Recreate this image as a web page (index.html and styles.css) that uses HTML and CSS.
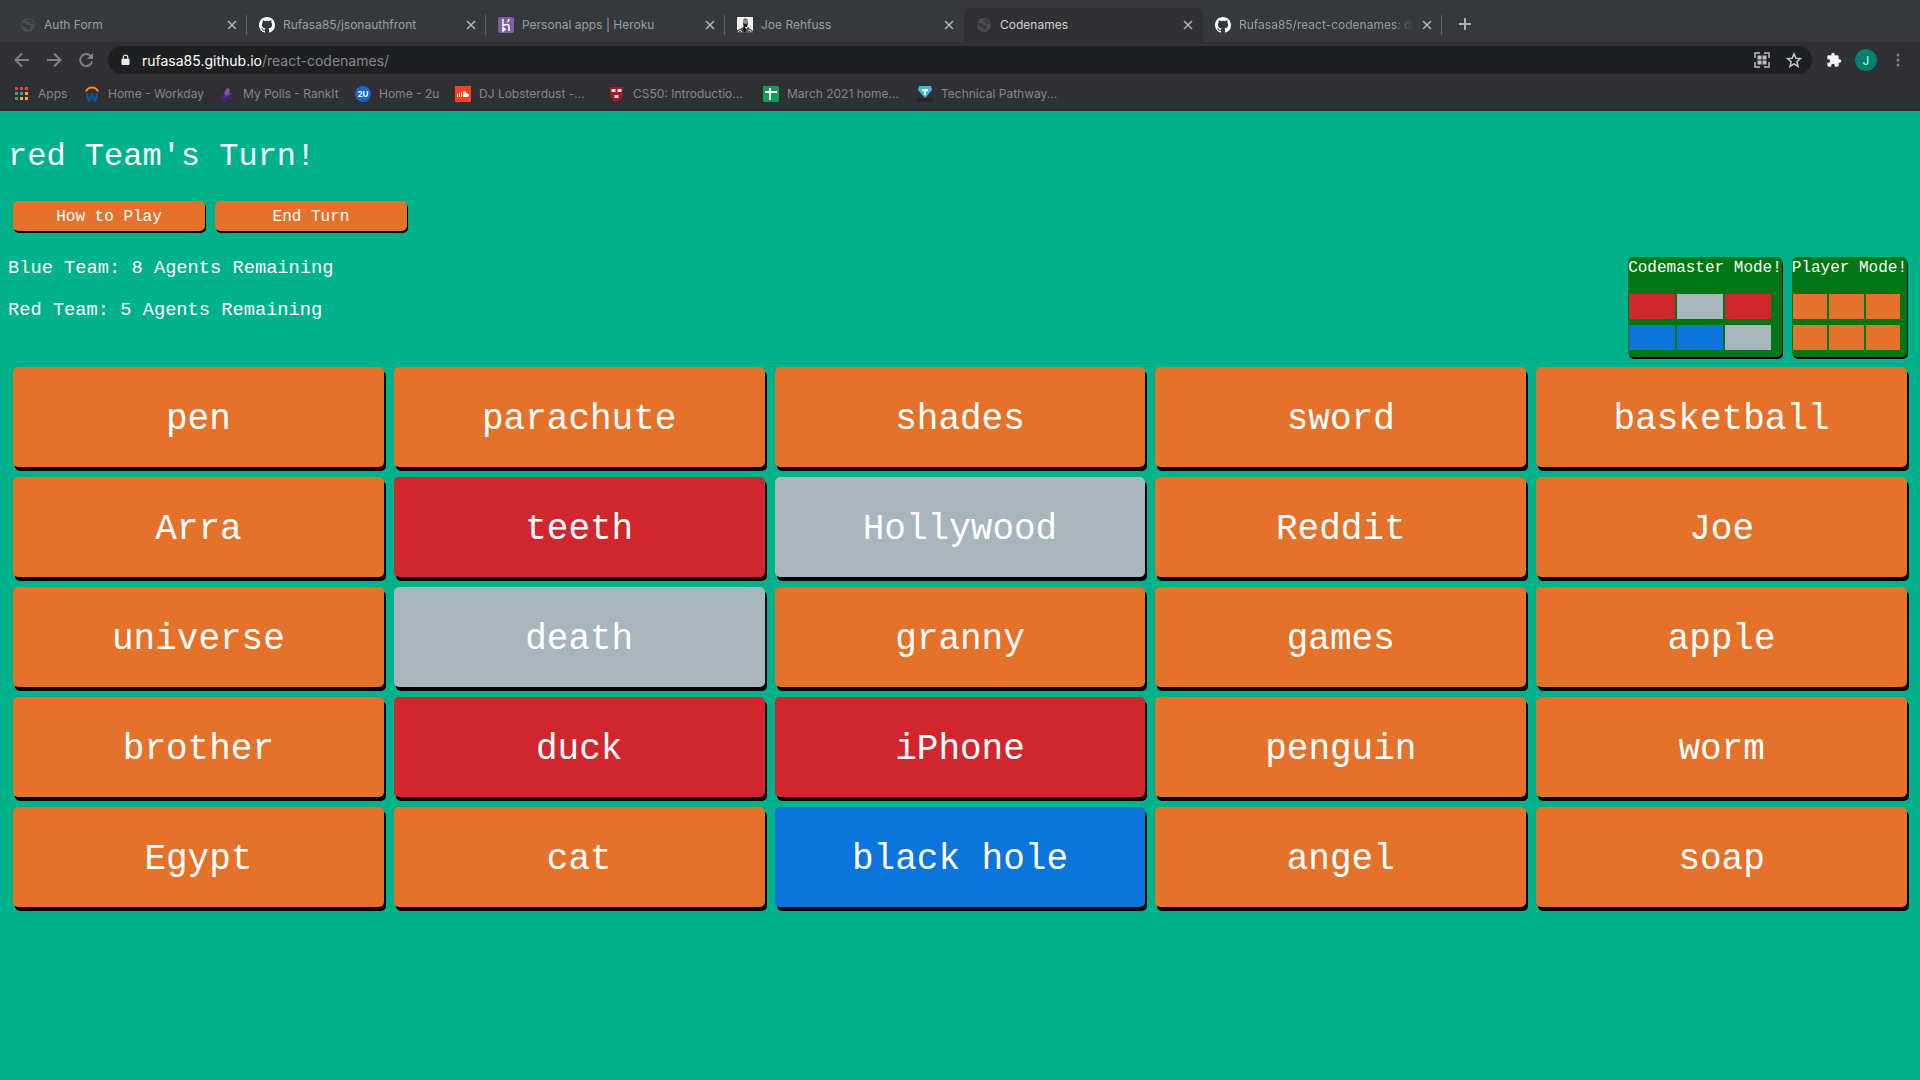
FILE: index.html
```html
<!DOCTYPE html>
<html lang="en">
<head>
<meta charset="utf-8">
<title>Codenames</title>
<link rel="stylesheet" href="styles.css">
</head>
<body>
<svg class="defs" width="0" height="0" aria-hidden="true">
  <symbol id="globe" viewBox="0 0 16 16"><circle cx="8" cy="8" r="7" fill="#4b4c50"/><path d="M2 6l3 0 2 2 3 0 1 2-2 3-2 0 0-2-2-1-3-1zM8 2l3 1 3 4-3 0-1-2-3-1z" fill="#36383b"/></symbol>
  <symbol id="github" viewBox="0 0 16 16"><path fill="#fff" d="M8 0C3.58 0 0 3.58 0 8c0 3.54 2.29 6.53 5.47 7.59.4.07.55-.17.55-.38 0-.19-.01-.82-.01-1.49-2.01.37-2.53-.49-2.69-.94-.09-.23-.48-.94-.82-1.13-.28-.15-.68-.52-.01-.53.63-.01 1.08.58 1.23.82.72 1.21 1.87.87 2.33.66.07-.52.28-.87.51-1.07-1.78-.2-3.64-.89-3.64-3.95 0-.87.31-1.59.82-2.15-.08-.2-.36-1.02.08-2.12 0 0 .67-.21 2.2.82.64-.18 1.32-.27 2-.27s1.36.09 2 .27c1.53-1.04 2.2-.82 2.2-.82.44 1.1.16 1.92.08 2.12.51.56.82 1.27.82 2.15 0 3.07-1.87 3.75-3.65 3.95.29.25.54.73.54 1.48 0 1.07-.01 1.93-.01 2.2 0 .21.15.46.55.38A8.01 8.01 0 0 0 16 8c0-4.42-3.58-8-8-8z"/></symbol>
  <symbol id="close" viewBox="0 0 10 10"><path d="M1 1l8 8M9 1l-8 8" stroke="currentColor" stroke-width="1.5" fill="none"/></symbol>
</svg>

<header class="browser">
  <nav class="tabs" aria-label="Tabs">
    <div class="tab"><svg class="icon"><use href="#globe"/></svg><span class="tab-title">Auth Form</span><button class="close" aria-label="Close tab"><svg><use href="#close"/></svg></button></div>
    <div class="tab"><svg class="icon"><use href="#github"/></svg><span class="tab-title">Rufasa85/jsonauthfront</span><button class="close" aria-label="Close tab"><svg><use href="#close"/></svg></button></div>
    <div class="tab"><svg class="icon" viewBox="0 0 16 16"><rect width="16" height="16" rx="2" fill="#7f5fa6"/><path d="M5 2v6.500q6-2.500 6 1V14M5 10.500v3.500l2-1.750zM11 2q0 1.500-1.500 3" fill="none" stroke="#fff" stroke-width="1.500"/></svg><span class="tab-title">Personal apps | Heroku</span><button class="close" aria-label="Close tab"><svg><use href="#close"/></svg></button></div>
    <div class="tab before-active"><svg class="icon" viewBox="0 0 16 16"><rect width="16" height="16" fill="#f2f2f2"/><path d="M6 3q2-3 5 0v4q-1 3-3 3T6 7z" fill="#8b8b8b"/><path d="M6 3q2-3 5 0L8 2zM6 6q3 2 5 0l-1 4H7z" fill="#222"/><path d="M0 13l5-2 2-2 2 3 2-2 5 4v2H0z" fill="#555"/><path d="M7 9l2 3-1 4-2-3z" fill="#111"/><path d="M1 15l2-2 2 2M11 14l2-1 1 2" stroke="#ccc" fill="none"/></svg><span class="tab-title">Joe Rehfuss</span><button class="close" aria-label="Close tab"><svg><use href="#close"/></svg></button></div>
    <div class="tab active"><svg class="icon"><use href="#globe"/></svg><span class="tab-title">Codenames</span><button class="close" aria-label="Close tab"><svg><use href="#close"/></svg></button></div>
    <div class="tab"><svg class="icon"><use href="#github"/></svg><span class="tab-title fade">Rufasa85/react-codenames: di</span><button class="close" aria-label="Close tab"><svg><use href="#close"/></svg></button></div>
    <button class="new-tab" aria-label="New tab"><svg viewBox="0 0 12 12"><path d="M6 0v12M0 6h12" stroke="currentColor" stroke-width="2"/></svg></button>
  </nav>

  <div class="toolbar">
    <button class="tool" aria-label="Back"><svg viewBox="0 0 16 16"><path d="M15 8H2M8 1.500L1.500 8 8 14.500" fill="none" stroke="currentColor" stroke-width="2"/></svg></button>
    <button class="tool" aria-label="Forward"><svg viewBox="0 0 16 16"><path d="M1 8h13M8 1.500L14.500 8 8 14.500" fill="none" stroke="currentColor" stroke-width="2"/></svg></button>
    <button class="tool" aria-label="Reload"><svg viewBox="0 0 16 16"><path d="M13 4.500A6 6 0 1 0 14 9.500" fill="none" stroke="currentColor" stroke-width="2"/><path d="M15 1v6H9z" fill="currentColor"/></svg></button>
    <div class="address">
      <svg class="lock" viewBox="0 0 10 12"><path d="M2.500 5V3a2.500 2.500 0 0 1 5 0v2" fill="none" stroke="#e8e8e8" stroke-width="1.300"/><rect x="0.500" y="4.500" width="9" height="7" rx="1" fill="#e8e8e8"/></svg>
      <a class="url" href="#board"><span class="host">rufasa85.github.io</span>/react-codenames/</a>
      <button class="tool" aria-label="QR code"><svg viewBox="0 0 16 16" fill="none" stroke="#bdbec1" stroke-width="1.500"><path d="M1 6V1h5M10 1h5v5M15 10v5h-5M6 15H1v-5"/><path fill="#bdbec1" stroke="none" d="M3.500 3.500h4v4h-4zM8.500 3.500h4v4h-4zM3.500 8.500h4v4h-4zM8.500 8.500h4v4h-4z"/></svg></button>
      <button class="tool" aria-label="Bookmark this page"><svg viewBox="0 0 16 16"><path d="M8 1.800l1.800 4.400 4.700.4-3.600 3.100 1.100 4.600L8 11.800l-4 2.500 1.100-4.600L1.500 6.600l4.700-.4z" fill="none" stroke="#c5c6c9" stroke-width="1.500"/></svg></button>
    </div>
    <div class="profile">
      <button class="tool" aria-label="Extensions"><svg viewBox="0 0 24 24"><path fill="#f1f3f4" d="M20.500 11H19V7a2 2 0 0 0-2-2h-4V3.500a2.500 2.500 0 0 0-5 0V5H4a2 2 0 0 0-2 2v3.800h1.500a2.700 2.700 0 0 1 0 5.400H2V20a2 2 0 0 0 2 2h3.800v-1.500a2.700 2.700 0 0 1 5.400 0V22H17a2 2 0 0 0 2-2v-4h1.500a2.500 2.500 0 0 0 0-5z"/></svg></button>
      <button class="avatar">J</button>
      <button class="tool" aria-label="Menu"><svg viewBox="0 0 16 16" fill="currentColor"><circle cx="8" cy="3" r="1.500"/><circle cx="8" cy="8" r="1.500"/><circle cx="8" cy="13" r="1.500"/></svg></button>
    </div>
  </div>

  <nav class="bookmarks" aria-label="Bookmarks">
    <a href="#apps"><svg class="icon" viewBox="0 0 16 16"><path fill="#ea4335" d="M1 1h3v3H1zM6 1h3v3H6zM11 1h3v3h-3z"/><path fill="#34a853" d="M1 6h3v3H1zM1 11h3v3H1z"/><path fill="#4285f4" d="M6 6h3v3H6z"/><path fill="#fbaa1d" d="M11 6h3v3h-3zM6 11h3v3H6zM11 11h3v3h-3z"/></svg>Apps</a>
    <a href="#workday"><svg class="icon" viewBox="0 0 16 16"><path d="M2 5.500a6.500 6.500 0 0 1 12 0" fill="none" stroke="#f38b1b" stroke-width="2"/><path d="M2.500 7.500L5 14.500l3-6 3 6 2.500-7" fill="none" stroke="#0b56a8" stroke-width="2"/></svg>Home - Workday</a>
    <a href="#rankit"><svg class="icon" viewBox="0 0 16 16"><path d="M2 9l9-3 3 3v3L5 16l-3-3z" fill="#43236e"/><path d="M5 7l3-5 3 1-1 6-3 1z" fill="#7e57a4"/><path d="M4 10l8-3 1 1-8 3z" fill="#65409a"/></svg>My Polls - RankIt</a>
    <a href="#2u"><svg class="icon" viewBox="0 0 16 16"><circle cx="8" cy="8" r="8" fill="#1a66cc"/><text class="mark" x="8" y="11" text-anchor="middle">2U</text></svg>Home - 2u</a>
    <a href="#lobsterdust"><svg class="icon" viewBox="0 0 16 16"><rect width="16" height="16" fill="#f9401d"/><path d="M2.500 8v3M4.500 7v4M6.500 6v5" stroke="#fff"/><path d="M8 5.500q3-1 3.500 2 2.500-.5 2.500 1.500t-2 2H8z" fill="#fff"/></svg>DJ Lobsterdust -...</a>
    <a href="#cs50"><svg class="icon" viewBox="0 0 16 16"><path d="M1 1h13v8q-1 5-6.500 7Q2 14 1 9z" fill="#a3172d"/><path d="M2.500 3h4v3h-4zM8.500 3h4v3h-4zM5.500 9h4v3h-4z" fill="#ddd"/></svg>CS50: Introductio...</a>
    <a href="#march"><svg class="icon" viewBox="0 0 16 16"><rect width="16" height="16" rx="1" fill="#0f9d58"/><path d="M2 6h12M7 2v12" stroke="#fff" stroke-width="2"/></svg>March 2021 home...</a>
    <a href="#pathway"><svg class="icon" viewBox="0 0 16 16"><path d="M2 0h12l1 4-7 8-7-8z" fill="#42b7d9"/><path d="M5 3h6v2H9v4H7V5H5z" fill="#fff"/><path d="M0 14h16" stroke="#222326" stroke-width="3"/></svg>Technical Pathway...</a>
  </nav>
</header>

<main class="game">
  <h1>red Team's Turn!</h1>
  <div class="actions">
    <button class="action">How to Play</button>
    <button class="action">End Turn</button>
  </div>
  <section class="status">
    <div class="scores">
      <h3>Blue Team: 8 Agents Remaining</h3>
      <h3>Red Team: 5 Agents Remaining</h3>
    </div>
    <div class="modes">
      <button class="mode">Codemaster Mode!<span class="swatches"><i class="red"></i><i class="grey"></i><i class="red"></i><i class="blue"></i><i class="blue"></i><i class="grey"></i></span></button>
      <button class="mode">Player Mode!<span class="swatches"><i></i><i></i><i></i><i></i><i></i><i></i></span></button>
    </div>
  </section>
  <section class="board" id="board">
    <button class="card">pen</button>
    <button class="card">parachute</button>
    <button class="card">shades</button>
    <button class="card">sword</button>
    <button class="card">basketball</button>
    <button class="card">Arra</button>
    <button class="card red">teeth</button>
    <button class="card grey">Hollywood</button>
    <button class="card">Reddit</button>
    <button class="card">Joe</button>
    <button class="card">universe</button>
    <button class="card grey">death</button>
    <button class="card">granny</button>
    <button class="card">games</button>
    <button class="card">apple</button>
    <button class="card">brother</button>
    <button class="card red">duck</button>
    <button class="card red">iPhone</button>
    <button class="card">penguin</button>
    <button class="card">worm</button>
    <button class="card">Egypt</button>
    <button class="card">cat</button>
    <button class="card blue">black hole</button>
    <button class="card">angel</button>
    <button class="card">soap</button>
  </section>
</main>
</body>
</html>
```

FILE: styles.css
```css
* { box-sizing: border-box; }

body {
  margin: 0;
  background: #00b28c;
  color: #fff;
  font-family: "Liberation Mono", monospace;
}

button {
  border: 0;
  padding: 0;
  background: none;
  color: inherit;
  font: inherit;
}

.defs { display: block; }

/* Browser frame */
.browser {
  background: #302f33;
  border-bottom: 1px solid #262629;
  color: #9b9ea1;
  font-family: Inter, sans-serif;
  font-size: 12px;
}

.icon {
  flex: none;
  width: 16px;
  height: 16px;
}

.tabs {
  display: flex;
  height: 42px;
  padding: 8px 0 0 8px;
  background: #35393b;
}

.tab {
  display: flex;
  flex: 0 1 239px;
  align-items: center;
  gap: 8px;
  min-width: 0;
  padding: 0 10px 1px 12px;
  background: linear-gradient(#606365, #606365) right 7px / 1px 20px no-repeat;
}

.tab.before-active { background: none; }

.tab.active {
  background: #302f33;
  border-radius: 8px 8px 0 0;
  color: #d0d1d3;
}

.tab-title {
  flex: 1;
  white-space: nowrap;
}

.fade {
  -webkit-mask-image: linear-gradient(to right, #000 88%, transparent);
  mask-image: linear-gradient(to right, #000 88%, transparent);
}

.close {
  display: flex;
  color: #b4b6b8;
}

.close svg {
  width: 10px;
  height: 10px;
}

.new-tab {
  width: 46px;
  color: #aeb0b2;
}

.new-tab svg {
  width: 12px;
  height: 12px;
}

.toolbar {
  display: flex;
  align-items: center;
  gap: 16px;
  height: 36px;
  padding: 0 14px;
}

.tool {
  display: flex;
  color: #7f8184;
}

.tool svg {
  width: 16px;
  height: 16px;
}

.address {
  display: flex;
  flex: 1;
  align-items: center;
  gap: 16px;
  height: 28px;
  margin: 0 -2px;
  padding: 0 10px 0 13px;
  border-radius: 14px;
  background: #1e1f21;
  font-size: 14px;
}

.lock {
  width: 9px;
  height: 12px;
  margin-right: -4px;
}

.url {
  flex: 1;
  color: #86888b;
  text-decoration: none;
}

.host { color: #fff; }

.profile {
  display: flex;
  align-items: center;
  gap: 13px;
}

.avatar {
  width: 22px;
  height: 22px;
  border-radius: 50%;
  background: #048070;
  color: #d5ece8;
}

.bookmarks {
  display: grid;
  grid-template-columns: 70px 135px 136px 100px 154px 154px 154px auto;
  height: 32px;
  padding: 0 0 1px 14px;
}

.bookmarks a {
  display: flex;
  align-items: center;
  gap: 8px;
  color: #85878a;
  text-decoration: none;
  white-space: nowrap;
}

.mark {
  fill: #fff;
  font: bold 8px Inter, sans-serif;
}

/* Game */
.game { padding: 0 8px; }

h1,
h3 {
  margin: 0;
  font-weight: 400;
}

h1 {
  padding: 25px 0 18px;
  font-size: 32px;
  line-height: 42px;
}

h3 { line-height: 24px; }

.actions { display: flex; }

.action {
  width: 10vw;
  height: 30px;
  margin: 5px;
  padding-top: 2px;
  border-radius: 5px;
  background: #e4722b;
  box-shadow: 1px 2px #000;
}

.status {
  display: flex;
  justify-content: space-between;
}

.scores {
  display: flex;
  flex-direction: column;
  gap: 18px;
  padding-top: 20px;
}

.modes {
  display: flex;
  gap: 10px;
  margin: 21px 5px 5px;
}

.mode {
  display: flex;
  flex-direction: column;
  height: 100px;
  border-radius: 5px;
  background: #007714;
  box-shadow: 1px 2px #000;
  line-height: 22px;
}

.swatches {
  display: grid;
  grid-template-columns: repeat(3, 30%);
  gap: 6px 2px;
  width: 100%;
  margin: 15px 1px 0;
}

.swatches i {
  height: 25px;
  background: #e4722b;
}

.board {
  display: grid;
  grid-template-columns: repeat(5, 1fr);
  gap: 10px;
  padding: 5px;
}

.card {
  height: 100px;
  padding-top: 5px;
  border-radius: 5px;
  background: #e4722b;
  box-shadow: 2px 4px #000;
  font-size: 36px;
}

.card.red,
.swatches .red { background: #d2262e; }

.card.blue,
.swatches .blue { background: #0c75db; }

.card.grey,
.swatches .grey { background: #a8b5bc; }
```
